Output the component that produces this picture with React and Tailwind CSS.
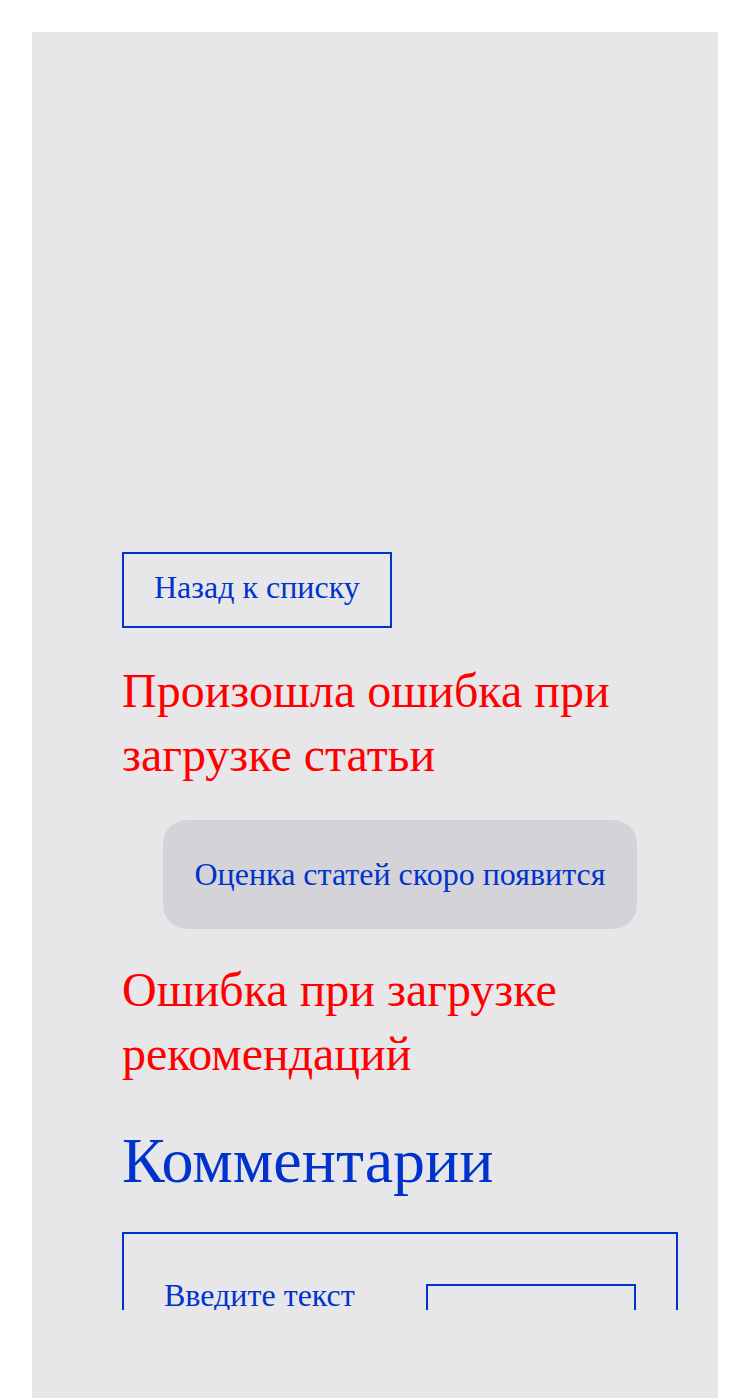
import React from 'react';

export default function App() {
  return (
    <div className="bg-white px-8 pt-8 font-['Liberation_Serif',serif] text-[32px] leading-[1.333]">
      <div className="h-[1366px] bg-[#e7e7ea] pl-[90px] pr-10 pb-[88px]">
        <div className="flex h-full flex-col gap-8 overflow-hidden">
          {/* article image placeholder */}
          <div className="h-[488px] shrink-0" />

          <div>
            <button className="border-2 border-[#0033cc] px-[30px] pt-[12px] pb-[18px] leading-[42px] text-[#0033cc]">
              Назад к списку
            </button>
          </div>

          <h2 className="-mt-px text-[48px] leading-[64px] text-[#ff0000]">
            Произошла ошибка при загрузке статьи
          </h2>

          <div className="mx-auto mt-px rounded-3xl bg-[#d4d4d8] px-8 py-[33px] text-[#0033cc]">
            Оценка статей скоро появится
          </div>

          <h2 className="-mt-[3px] text-[48px] leading-[64px] text-[#ff0000]">
            Ошибка при загрузке рекомендаций
          </h2>

          <h2 className="mt-[2px] text-[64px] leading-[82px] text-[#0033cc]">Комментарии</h2>

          <form className="-mt-[2px] flex shrink-0 items-start gap-8 border-2 border-[#0033cc] px-10 pt-10 pb-10">
            <div className="w-[230px] text-[#0033cc]">Введите текст комментария</div>
            <button
              type="button"
              className="mt-[10px] ml-auto w-[210px] border-2 border-[#0033cc] px-8 pt-[14px] pb-4 text-[#0033cc]"
            >
              Отправить
            </button>
          </form>
        </div>
      </div>
    </div>
  );
}
